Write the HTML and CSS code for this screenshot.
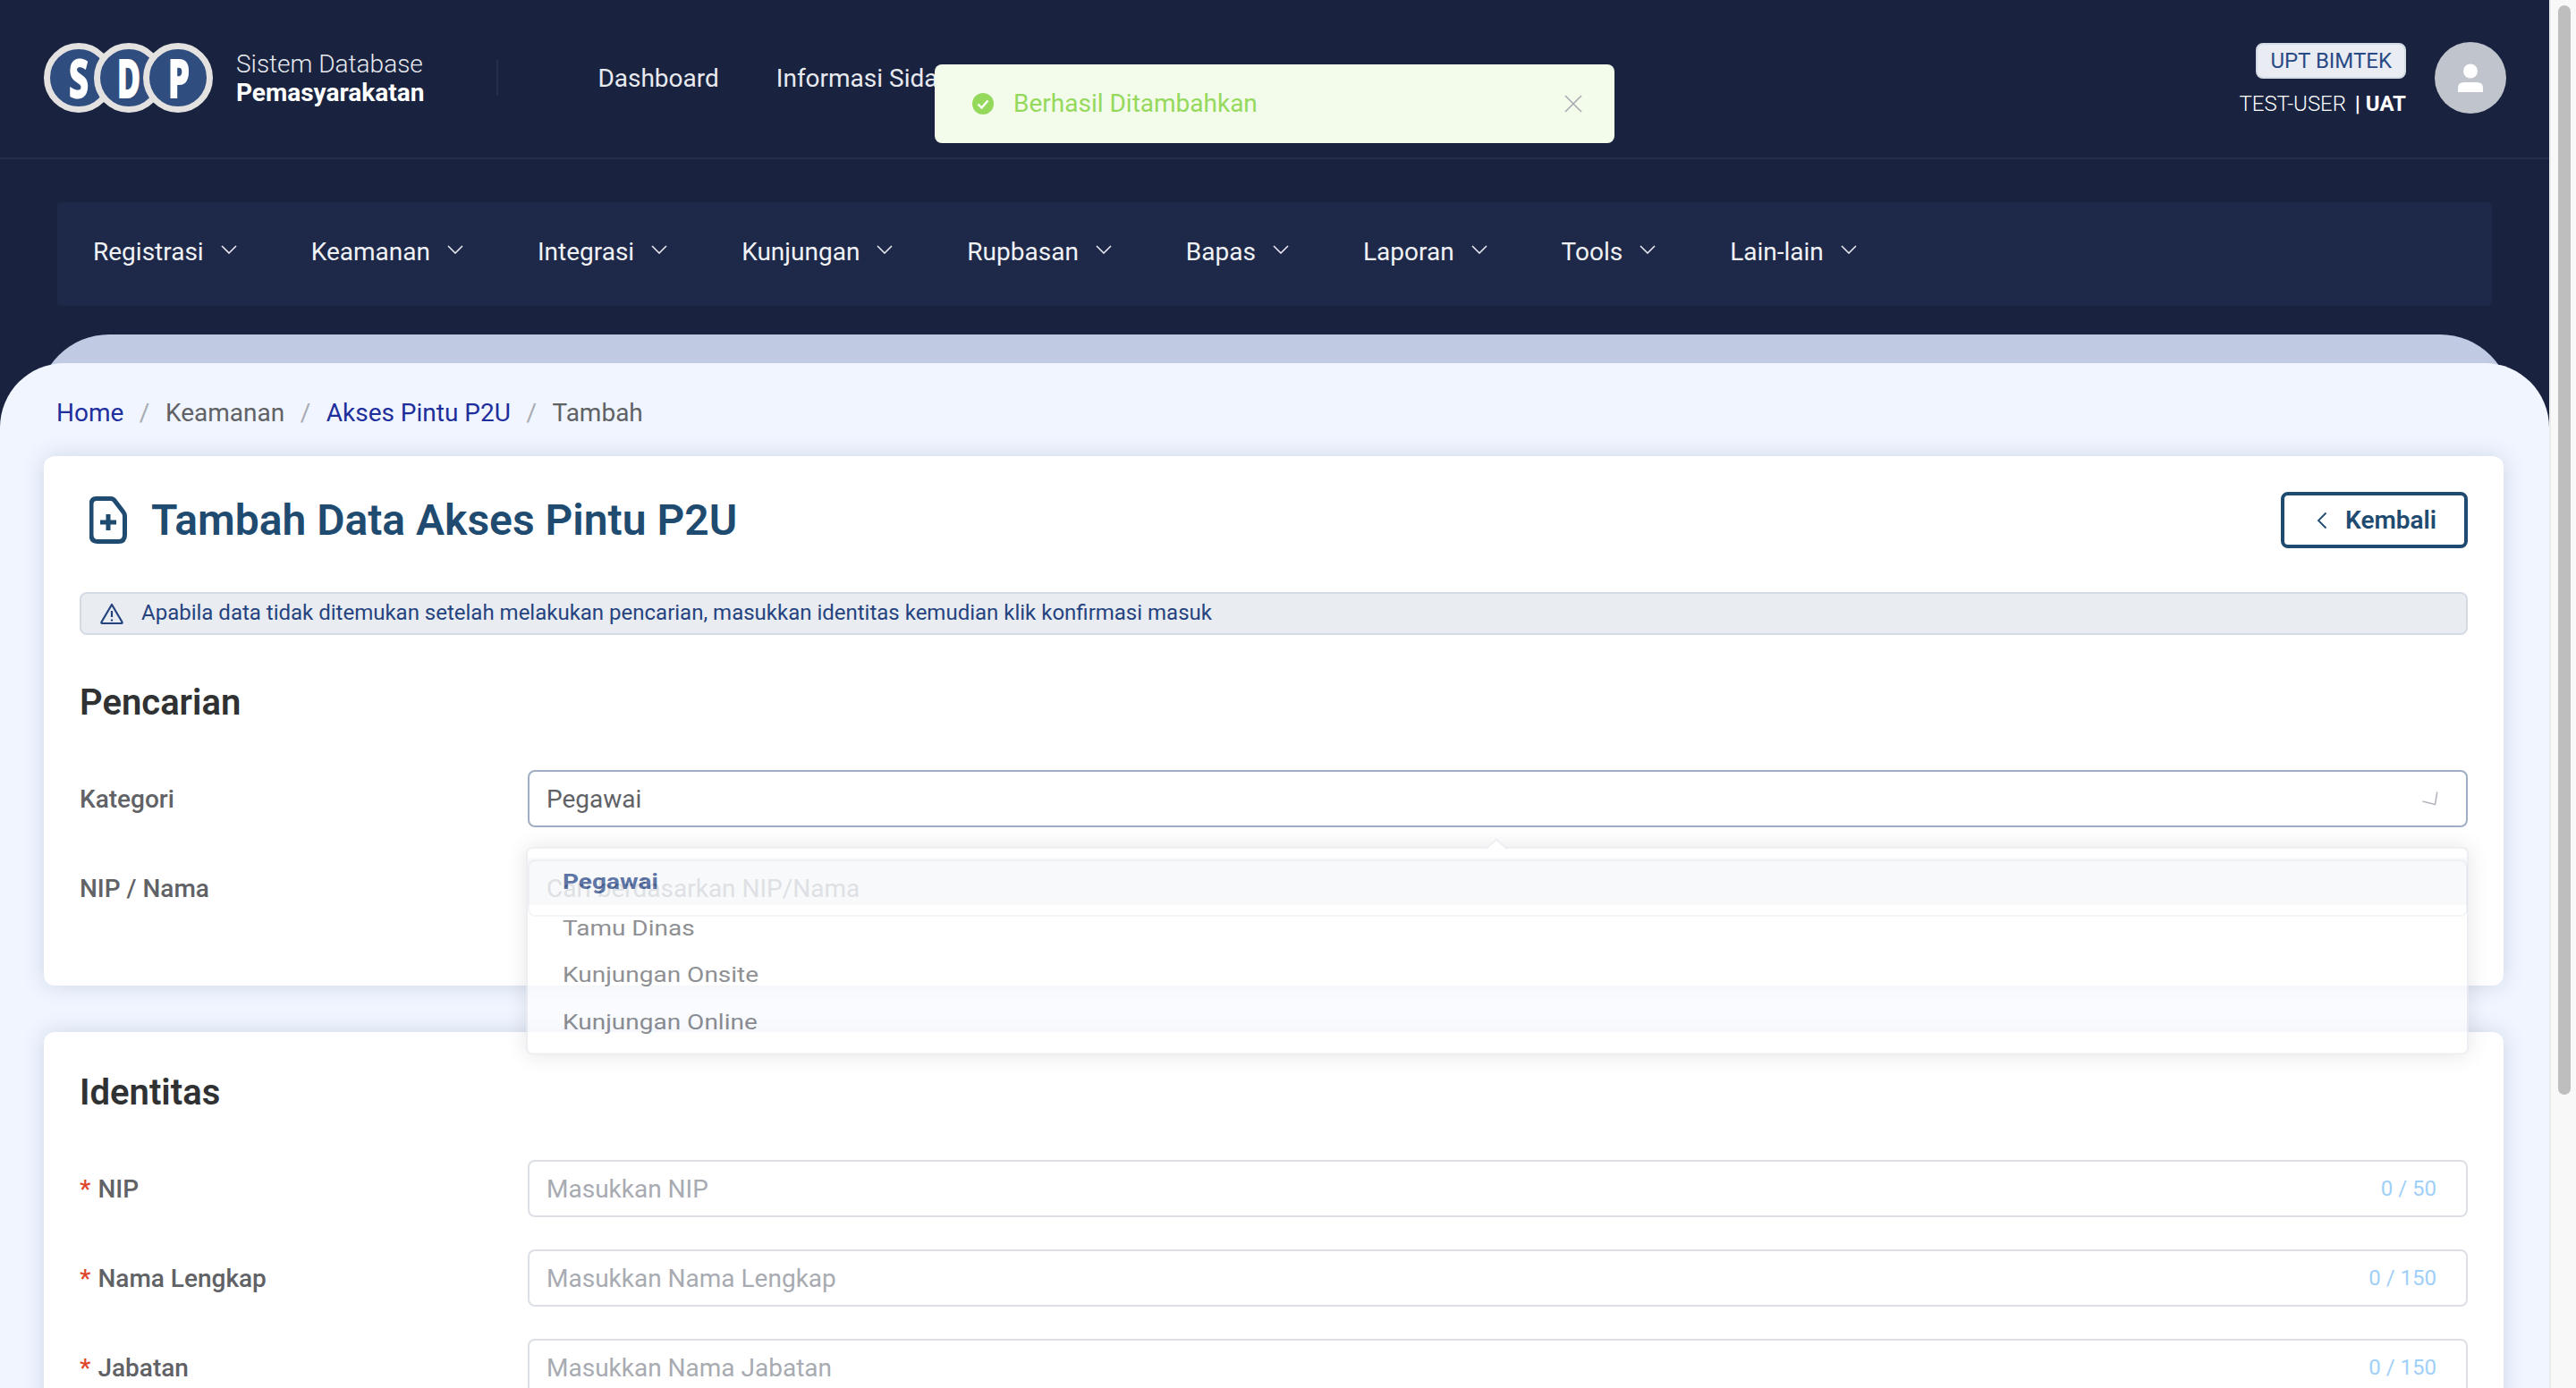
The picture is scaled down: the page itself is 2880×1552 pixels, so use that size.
FILE: index.html
```html
<!DOCTYPE html>
<html lang="en">

<head>
    <meta charset="UTF-8">
    <meta name="viewport" content="width=device-width, initial-scale=1.0">
    <title>Tambah Data Akses Pintu P2U</title>
    <link rel="stylesheet" href="styles.css">
</head>

<body>
    <div class="page">
        <header class="topbar">
            <svg class="logo" viewBox="0 0 188 80" width="188" height="80">
                <circle cx="39" cy="40" r="35.5" fill="#2f4d7e" stroke="#e3e2e0" stroke-width="7" />
                <text x="39" y="63" class="logo-letter" textLength="23" lengthAdjust="spacingAndGlyphs">S</text>
                <circle cx="95" cy="40" r="35.5" fill="#2f4d7e" stroke="#e3e2e0" stroke-width="7" />
                <text x="95" y="63" class="logo-letter" textLength="27" lengthAdjust="spacingAndGlyphs">D</text>
                <circle cx="150" cy="40" r="35.5" fill="#2f4d7e" stroke="#e3e2e0" stroke-width="7" />
                <text x="151" y="63" class="logo-letter" textLength="25" lengthAdjust="spacingAndGlyphs">P</text>
            </svg>
            <div class="brand">
                <div class="brand-light">Sistem Database</div>
                <div class="brand-bold">Pemasyarakatan</div>
            </div>
            <div class="top-divider"></div>
            <nav class="top-nav">
                <a>Dashboard</a>
                <a>Informasi Sidang</a>
            </nav>
            <div class="user-box">
                <div class="user-info">
                    <span class="badge">UPT BIMTEK</span>
                    <div class="user-name">TEST-USER <b>| UAT</b></div>
                </div>
                <div class="avatar">
                    <svg viewBox="0 0 28 32" width="28" height="32" fill="#fff">
                        <circle cx="14" cy="8.5" r="8" />
                        <path d="M0 32v-5q0-6 7-6h14q7 0 7 6v5z" />
                    </svg>
                </div>
            </div>
        </header>

        <div class="toast">
            <svg viewBox="0 0 24 24" width="24" height="24">
                <circle cx="12" cy="12" r="12" fill="#95d95c" />
                <path d="M6.5 12.5l4 4 7-8" fill="none" stroke="#fff" stroke-width="2.4" />
            </svg>
            <span class="toast-text">Berhasil Ditambahkan</span>
            <svg class="toast-close" viewBox="0 0 20 20" width="20" height="20">
                <path d="M1 1l18 18M19 1L1 19" stroke="#a8abb2" stroke-width="1.6" fill="none" />
            </svg>
        </div>

        <div class="subnav-wrap">
            <nav class="subnav">
                <a class="subnav-item">Registrasi <svg class="chev" viewBox="0 0 18 10"><path d="M1 1l8 8 8-8" /></svg></a>
                <a class="subnav-item">Keamanan <svg class="chev" viewBox="0 0 18 10"><path d="M1 1l8 8 8-8" /></svg></a>
                <a class="subnav-item">Integrasi <svg class="chev" viewBox="0 0 18 10"><path d="M1 1l8 8 8-8" /></svg></a>
                <a class="subnav-item">Kunjungan <svg class="chev" viewBox="0 0 18 10"><path d="M1 1l8 8 8-8" /></svg></a>
                <a class="subnav-item">Rupbasan <svg class="chev" viewBox="0 0 18 10"><path d="M1 1l8 8 8-8" /></svg></a>
                <a class="subnav-item">Bapas <svg class="chev" viewBox="0 0 18 10"><path d="M1 1l8 8 8-8" /></svg></a>
                <a class="subnav-item">Laporan <svg class="chev" viewBox="0 0 18 10"><path d="M1 1l8 8 8-8" /></svg></a>
                <a class="subnav-item">Tools <svg class="chev" viewBox="0 0 18 10"><path d="M1 1l8 8 8-8" /></svg></a>
                <a class="subnav-item">Lain-lain <svg class="chev" viewBox="0 0 18 10"><path d="M1 1l8 8 8-8" /></svg></a>
            </nav>
        </div>

        <div class="back-panel"></div>

        <main class="main">
            <div class="breadcrumb">
                <a class="crumb-link">Home</a>
                <span class="crumb-sep">/</span>
                <span>Keamanan</span>
                <span class="crumb-sep">/</span>
                <a class="crumb-link">Akses Pintu P2U</a>
                <span class="crumb-sep">/</span>
                <span>Tambah</span>
            </div>

            <section class="card card-top">
                <div class="title-row">
                    <svg class="title-icon" viewBox="0 0 42 53" width="42" height="53" fill="none" stroke="#1f4b70" stroke-width="5">
                        <path d="M8 2.5h16q2 0 3.500 1.500l10 13q2 2.500 2 5v21q0 7.500-7 7.500H9q-7 0-7-7.500V9q0-6.500 6-6.500z" />
                        <path d="M21 20v18M12 29h18" />
                    </svg>
                    <h1>Tambah Data Akses Pintu P2U</h1>
                    <button class="back-btn">
                        <svg viewBox="0 0 12 20" width="12" height="20" fill="none" stroke="#1f4b70" stroke-width="1.800"><path d="M10.500 1.500L2 10l8.500 8.500" /></svg>
                        Kembali
                    </button>
                </div>

                <div class="notice">
                    <svg viewBox="0 0 26 24" width="26" height="24" fill="none" stroke="#25437f" stroke-width="2.200">
                        <path d="M13 2L24.500 21.500q.5 1.500-1 1.500H2.500q-1.500 0-1-1.500z" stroke-linejoin="round" />
                        <path d="M13 9v7M13 18.500v2" />
                    </svg>
                    <span class="notice-text">Apabila data tidak ditemukan setelah melakukan pencarian, masukkan identitas kemudian klik konfirmasi masuk</span>
                </div>

                <h2>Pencarian</h2>

                <div class="form-row">
                    <label>Kategori</label>
                    <div class="field field-open">
                        <input value="Pegawai" readonly>
                        <svg class="select-arrow" viewBox="0 0 18 16" width="18" height="16" fill="none" stroke="#b4b7bf" stroke-width="1.600"><path d="M0.500 11l14 3.500L16.800 0.500" /></svg>
                        <div class="dropdown">
                            <div class="dropdown-item active">Pegawai</div>
                            <div class="dropdown-item">Tamu Dinas</div>
                            <div class="dropdown-item">Kunjungan Onsite</div>
                            <div class="dropdown-item">Kunjungan Online</div>
                        </div>
                    </div>
                </div>

                <div class="form-row">
                    <label>NIP / Nama</label>
                    <div class="field">
                        <input placeholder="Cari berdasarkan NIP/Nama">
                    </div>
                </div>
            </section>

            <section class="card">
                <h2 class="h2-first">Identitas</h2>

                <div class="form-row">
                    <label><i>*</i>NIP</label>
                    <div class="field">
                        <input placeholder="Masukkan NIP">
                        <span class="count">0 / 50</span>
                    </div>
                </div>
                <div class="form-row">
                    <label><i>*</i>Nama Lengkap</label>
                    <div class="field">
                        <input placeholder="Masukkan Nama Lengkap">
                        <span class="count">0 / 150</span>
                    </div>
                </div>
                <div class="form-row">
                    <label><i>*</i>Jabatan</label>
                    <div class="field">
                        <input placeholder="Masukkan Nama Jabatan">
                        <span class="count">0 / 150</span>
                    </div>
                </div>
            </section>
        </main>
    </div>

    <div class="scrollbar">
        <div class="scroll-thumb"></div>
    </div>
</body>

</html>
```

FILE: styles.css
```css
* {
    box-sizing: border-box;
}

html,
body {
    margin: 0;
    height: 100%;
    overflow: hidden;
}

body {
    display: flex;
    font-family: Roboto, "Liberation Sans", sans-serif;
    font-size: 28px;
    background-color: #19233f;
}

.page {
    position: relative;
    flex: 1;
    min-width: 0;
    height: 100vh;
    overflow: hidden;
    background-color: #19233f;
}

/* top header */
.topbar {
    display: flex;
    align-items: center;
    height: 178px;
    padding: 0 48px 2px 49px;
    border-bottom: 2px solid #232e4c;
}

.logo {
    overflow: visible;
}

.logo-letter {
    font-family: "Open Sans", sans-serif;
    font-size: 62px;
    font-weight: 800;
    fill: #fff;
    text-anchor: middle;
}

.brand {
    margin-left: 27px;
    padding-top: 2px;
    line-height: 32px;
    color: #e8eaf0;
}

.brand-light {
    font-weight: 300;
}

.brand-bold {
    font-weight: 700;
    color: #fff;
}

.top-divider {
    width: 2px;
    height: 40px;
    margin-left: 81px;
    background-color: #232e4c;
}

.top-nav {
    display: flex;
    gap: 64px;
    margin-left: 111px;
    color: #e8eaf0;
}

.user-box {
    display: flex;
    align-items: center;
    gap: 32px;
    margin-left: auto;
}

.user-info {
    display: flex;
    flex-direction: column;
    align-items: flex-end;
    gap: 14px;
    margin-top: 4px;
}

.badge {
    padding: 0 14px;
    height: 40px;
    line-height: 37px;
    font-size: 24px;
    color: #2a4a85;
    background-color: #e9ecf3;
    border: 2px solid #d5dbe5;
    border-radius: 8px;
}

.user-name {
    font-size: 24px;
    font-weight: 300;
    line-height: 28px;
    color: #fff;
}

.user-name b {
    margin-left: 4px;
    font-weight: 700;
}

.avatar {
    display: flex;
    align-items: center;
    justify-content: center;
    width: 80px;
    height: 80px;
    border-radius: 50%;
    background-color: #c0c4cc;
}

/* success toast */
.toast {
    position: absolute;
    top: 72px;
    left: 1045px;
    z-index: 5;
    display: flex;
    align-items: center;
    width: 760px;
    height: 88px;
    padding: 0 36px 0 42px;
    background-color: #f3fbea;
    border-radius: 8px;
}

.toast-text {
    margin-left: 22px;
    margin-top: -2px;
    color: #95d95c;
}

.toast-close {
    margin-left: auto;
}

/* second menu */
.subnav-wrap {
    padding: 48px 64px 32px;
}

.subnav {
    display: flex;
    align-items: center;
    height: 116px;
    padding-left: 40px;
    padding-bottom: 5px;
    background-color: #1e2949;
    border-radius: 4px;
}

.subnav-item {
    display: flex;
    align-items: center;
    gap: 19px;
    margin-right: 83px;
    color: #f0f2f6;
}

.chev {
    width: 18px;
    height: 10px;
    margin-top: -6px;
    fill: none;
    stroke: #e8eaf0;
    stroke-width: 1.600;
}

.back-panel {
    height: 80px;
    margin: 0 42px;
    background-color: #c0cbe3;
    border-radius: 80px 80px 0 0;
}

/* main content */
.main {
    position: relative;
    height: 1200px;
    margin-top: -48px;
    padding: 0 51px 0 49px;
    background-color: #f0f5ff;
    border-radius: 72px 72px 0 0;
}

.breadcrumb {
    display: flex;
    align-items: center;
    gap: 17.500px;
    height: 104px;
    padding-left: 14px;
    padding-top: 6px;
    color: #606266;
}

.crumb-link {
    color: #1e2f9c;
}

.crumb-sep {
    color: #a8abb2;
}

.card {
    position: relative;
    padding: 40px 40px 40px 40px;
    margin-bottom: 52px;
    background-color: #fff;
    border-radius: 12px;
    box-shadow: 0 0 24px rgba(60, 75, 120, 0.18);
}

.card-top {
    z-index: 2;
    height: 592px;
}

.title-row {
    display: flex;
    align-items: center;
    height: 63px;
}

.title-icon {
    margin-left: 11px;
}

h1 {
    margin: 0 0 0 27px;
    font-size: 48px;
    font-weight: 600;
    color: #1f4b70;
}

.back-btn {
    display: flex;
    align-items: center;
    gap: 20px;
    height: 63px;
    width: 209px;
    margin-left: auto;
    padding: 0 0 0 36px;
    font-family: inherit;
    font-size: 28px;
    font-weight: 600;
    color: #1f4b70;
    background-color: #fff;
    border: 4px solid #1f4b70;
    border-radius: 8px;
}

.notice {
    display: flex;
    align-items: center;
    gap: 20px;
    height: 48px;
    margin-top: 49px;
    padding-left: 21px;
    font-size: 24px;
    color: #25437f;
    background-color: #e9ecf1;
    border: 2px solid #d5dbe5;
    border-radius: 8px;
}

.notice-text {
    margin-top: -2px;
}

h2 {
    margin: 52px 0 51px;
    height: 48px;
    line-height: 48px;
    font-size: 40px;
    font-weight: 600;
    color: #303133;
}

.h2-first {
    margin-top: 4px;
}

.form-row {
    display: grid;
    grid-template-columns: 501px 1fr;
    align-items: center;
    height: 64px;
    margin-bottom: 36px;
}

label {
    font-weight: 500;
    color: #606266;
}

label i {
    margin-right: 8px;
    font-style: normal;
    color: #e0452c;
}

.field {
    position: relative;
    display: flex;
    align-items: center;
    height: 64px;
    padding: 0 33px 0 19px;
    border: 2px solid #dcdfe6;
    border-radius: 8px;
}

.field-open {
    border-color: #a0aec4;
}

.field input {
    flex: 1;
    min-width: 0;
    padding: 0;
    border: 0;
    outline: 0;
    font-family: inherit;
    font-size: 28px;
    color: #606266;
    background: transparent;
}

.field input::placeholder {
    color: #a8abb2;
}

.count {
    font-size: 24px;
    color: #a0d0f8;
}

.select-arrow {
    margin-right: -2px;
}

/* select menu, caught halfway through its opening animation */
.dropdown {
    position: absolute;
    top: 84px;
    left: -4px;
    right: -3px;
    z-index: 3;
    height: 264px;
    padding-top: 12px;
    font-size: 28px;
    color: #606266;
    background-color: #fff;
    border: 2px solid #e4e7ed;
    border-radius: 8px;
    box-shadow: 0 0 24px rgba(0, 0, 0, 0.14);
    opacity: 0.7;
    transform: scaleY(0.88);
    transform-origin: top;
}

.dropdown::before {
    content: "";
    position: absolute;
    top: -9px;
    left: 1074px;
    width: 16px;
    height: 16px;
    background-color: #fff;
    border: 2px solid #e4e7ed;
    border-right: 0;
    border-bottom: 0;
    transform: rotate(45deg);
}

.dropdown-item {
    height: 59.500px;
    line-height: 59.500px;
    padding-left: 39px;
}

.dropdown-item.active {
    font-weight: 700;
    color: #1a3d80;
    background-color: #f5f7fa;
}

/* page scrollbar */
.scrollbar {
    flex: none;
    width: 30px;
    height: 100vh;
    padding: 6px 6px 0 8px;
    background-color: #f8f8f8;
    border-left: 2px solid #ebebeb;
}

.scroll-thumb {
    height: 1218px;
    background-color: #bebebe;
    border-radius: 8px;
}
```
